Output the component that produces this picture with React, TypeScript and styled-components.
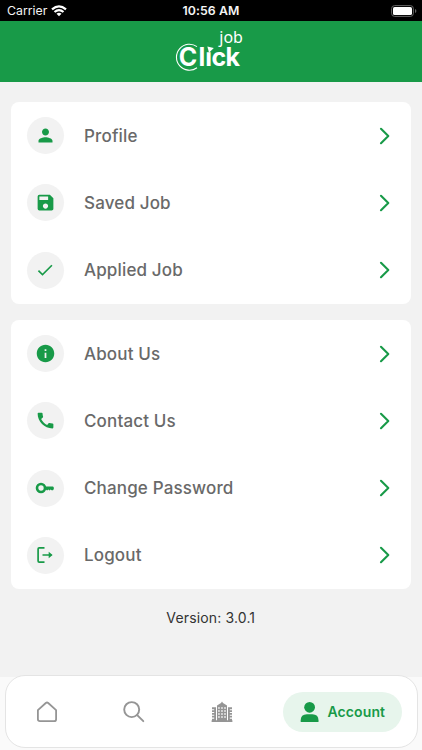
import React from 'react';
import styled, { createGlobalStyle } from 'styled-components';
import { MdPerson, MdSave, MdCheck, MdInfo, MdCall } from 'react-icons/md';

const GREEN = '#189a48';

const GlobalStyle = createGlobalStyle`
  * { box-sizing: border-box; }
  body { margin: 0; background: #f2f2f2; font-family: Inter, "Liberation Sans", sans-serif; }
`;

const Screen = styled.div`
  display: flex;
  flex-direction: column;
  width: 422px;
  height: 750px;
  overflow: hidden;
  background: #f2f2f2;
`;

const StatusBar = styled.div`
  display: grid;
  grid-template-columns: 1fr auto 1fr;
  align-items: center;
  flex: none;
  height: 21px;
  padding: 0 7px;
  background: #000;
  color: #f4f4f4;
  font-size: 12.3px;
`;

const Carrier = styled.div`
  display: flex;
  align-items: center;
  gap: 4px;
`;

const Clock = styled.div`
  font-size: 12.3px;
  font-weight: 600;
  letter-spacing: 0.1px;
`;

const BatterySlot = styled.div`
  display: flex;
  justify-content: flex-end;
  margin-right: -2px;
`;

const Header = styled.header`
  display: flex;
  justify-content: center;
  flex: none;
  height: 61px;
  background: ${GREEN};
`;

const Content = styled.main`
  display: flex;
  flex-direction: column;
  gap: 16px;
  flex: none;
  height: 593px;
  padding: 20px 11px 0 10.5px;
`;

const Card = styled.section`
  display: flex;
  flex-direction: column;
  border-radius: 8px;
  background: #fff;
`;

const Row = styled.div`
  display: flex;
  align-items: center;
  height: 67.3px;
  padding: 0 20.5px 0 16px;
`;

const IconCircle = styled.div`
  display: flex;
  align-items: center;
  justify-content: center;
  width: 37px;
  height: 37px;
  border-radius: 50%;
  background: #f2f2f2;
  color: ${GREEN};
`;

const RowLabel = styled.span`
  flex: 1;
  margin-left: 20.5px;
  color: #696969;
  font-size: 17px;
  font-weight: 500;
  letter-spacing: 0.15px;
`;

const Version = styled.div`
  margin-top: 4px;
  text-align: center;
  color: #333;
  font-size: 14px;
  line-height: 17px;
  letter-spacing: 0.15px;
`;

const NavArea = styled.div`
  flex: 1;
  padding: 0 4px 2px 5px;
  background: linear-gradient(#f2f2f2 2px, #fafafa 2px);
`;

const NavBar = styled.nav`
  display: flex;
  align-items: center;
  height: 73px;
  padding: 0 15.5px 0 0;
  border: 1.5px solid #e4e4e4;
  border-radius: 20px;
  background: #fff;
`;

const NavItem = styled.div`
  display: flex;
  flex: none;
  justify-content: center;
  width: 84px;
  color: #959595;
  &:first-child { width: 82px; }
  &:nth-child(2) { width: 92px; }
`;

const ActiveItem = styled.div`
  display: flex;
  align-items: center;
  flex: none;
  gap: 9px;
  width: 119px;
  height: 40px;
  margin-left: auto;
  padding-left: 17px;
  border-radius: 20px;
  background: #e7f5ec;
  color: ${GREEN};
  font-size: 14px;
  font-weight: 600;
  letter-spacing: 0.1px;
`;

const Wifi = () => (
  <svg width="16" height="12" viewBox="0 0 16 12" fill="none" stroke="#fff" strokeWidth="2.2">
    <path d="M1 4.4Q8-1.8 15 4.4M3.5 7Q8 3.1 12.5 7" />
    <path d="M8 11.3 5.5 8.8Q8 6.8 10.5 8.8Z" fill="#fff" stroke="none" />
  </svg>
);

const Battery = () => (
  <svg width="26" height="12" viewBox="0 0 26 12">
    <rect x="0.6" y="0.6" width="21.8" height="10.8" rx="3" fill="none" stroke="#666" />
    <rect x="2" y="2" width="19" height="8" rx="1.6" fill="#fff" />
    <path d="M24 4v4q1.4-.6 1.4-2T24 4" fill="#666" />
  </svg>
);

const Logo = () => (
  <svg width="100" height="60" viewBox="161 21 100 60" fill="#fff">
    <text x="219.3" y="43" fontFamily="'Noto Sans', sans-serif" fontSize="15.5" textLength="23.6" lengthAdjust="spacingAndGlyphs">job</text>
    <text x="178.8 198.6 205.3 211.6 225.4" y="66" fontFamily="Inter, sans-serif" fontSize="25" fontWeight="700">Click</text>
    <rect x="205" y="44" width="7" height="8.2" fill={GREEN} />
    <path d="M207.4 46.4 213.8 48 209 52.8Z" />
    <path d="M197 46.6A13 13 0 1 0 197 67.8" fill="none" stroke="#fff" strokeWidth="1.1" />
  </svg>
);

const Chevron = () => (
  <svg width="12" height="18" viewBox="0 0 12 18" fill="none" stroke={GREEN} strokeWidth="2.1" strokeLinecap="round" strokeLinejoin="round">
    <path d="M2 1.8 9.3 9 2 16.2" />
  </svg>
);

const KeyIcon = () => (
  <svg width="20" height="20" viewBox="0 0 20 20" fill="none" stroke={GREEN}>
    <circle cx="6" cy="10" r="4" strokeWidth="2.6" />
    <path d="M10 8.4H18q1.8 1.7 0 3.8h-1.4l-1-.8-1 1-1.2-1-1.3 1-1-.6H10Z" fill={GREEN} stroke="none" />
  </svg>
);

const LogoutIcon = () => (
  <svg width="20" height="20" viewBox="0 0 20 20" fill="none" stroke={GREEN} strokeWidth="1.7">
    <path d="M9.5 2.8H4.2q-1.1 0-1.1 1.1v12.2q0 1.1 1.1 1.1h5.3M7.5 10h9" />
    <path d="M13.7 6.7 17.6 10l-3.9 3.3Z" fill={GREEN} stroke="none" />
  </svg>
);

const HomeIcon = () => (
  <svg width="24" height="24" viewBox="0 0 24 24" fill="none" stroke="currentColor" strokeWidth="1.8" strokeLinejoin="round">
    <path d="M2.9 10.2 10.8 3q1.2-1 2.4 0l7.9 7.2v9q0 2-2 2H4.9q-2 0-2-2Z" />
  </svg>
);

const SearchIcon = () => (
  <svg width="24" height="24" viewBox="0 0 24 24" fill="none" stroke="currentColor" strokeWidth="1.9" strokeLinecap="round">
    <circle cx="9.7" cy="9.6" r="7.5" />
    <path d="m15.2 15.1 6.1 6.1" />
  </svg>
);

const BuildingIcon = () => (
  <svg width="22" height="22" viewBox="0 0 22 22" fill="currentColor">
    <path d="M6 20V4.5l2-1.2L10 2l1-1.4L12 2l2 1.3 2 1.2V20ZM1 6.3h4V20H1ZM17 6.3h4V20h-4ZM.6 19.2h20.8V21H.6Z" />
    <path d="M7.2 7h7.6M7.2 10h7.6M7.2 13h7.6M7.2 16h7.6" stroke="#fff" strokeWidth="1.5" strokeDasharray="1.5 1.53" />
    <path d="M1 8.7h2.2M1 11.5h2.2M1 14.3h2.2M1 17.1h2.2M18.8 8.7H21M18.8 11.5H21M18.8 14.3H21M18.8 17.1H21" stroke="#fff" strokeWidth="1.1" />
  </svg>
);

const AccountIcon = () => (
  <svg width="19" height="22" viewBox="0 0 19 22" fill="currentColor">
    <circle cx="9.6" cy="6.3" r="5.4" />
    <path d="M.7 21v-1.7q0-6 6.2-6h5.4q6.2 0 6.2 6V21Z" />
  </svg>
);

const groups = [
  [
    { label: 'Profile', icon: <MdPerson size={21} /> },
    { label: 'Saved Job', icon: <MdSave size={21} /> },
    { label: 'Applied Job', icon: <MdCheck size={20} /> },
  ],
  [
    { label: 'About Us', icon: <MdInfo size={21} /> },
    { label: 'Contact Us', icon: <MdCall size={21} /> },
    { label: 'Change Password', icon: <KeyIcon /> },
    { label: 'Logout', icon: <LogoutIcon /> },
  ],
];

export default function App() {
  return (
    <>
      <GlobalStyle />
      <Screen>
        <StatusBar>
          <Carrier>Carrier <Wifi /></Carrier>
          <Clock>10:56 AM</Clock>
          <BatterySlot><Battery /></BatterySlot>
        </StatusBar>
        <Header><Logo /></Header>
        <Content>
          {groups.map((rows) => (
            <Card key={rows[0].label}>
              {rows.map(({ label, icon }) => (
                <Row key={label}>
                  <IconCircle>{icon}</IconCircle>
                  <RowLabel>{label}</RowLabel>
                  <Chevron />
                </Row>
              ))}
            </Card>
          ))}
          <Version>Version: 3.0.1</Version>
        </Content>
        <NavArea>
          <NavBar>
            <NavItem><HomeIcon /></NavItem>
            <NavItem><SearchIcon /></NavItem>
            <NavItem><BuildingIcon /></NavItem>
            <ActiveItem><AccountIcon />Account</ActiveItem>
          </NavBar>
        </NavArea>
      </Screen>
    </>
  );
}
